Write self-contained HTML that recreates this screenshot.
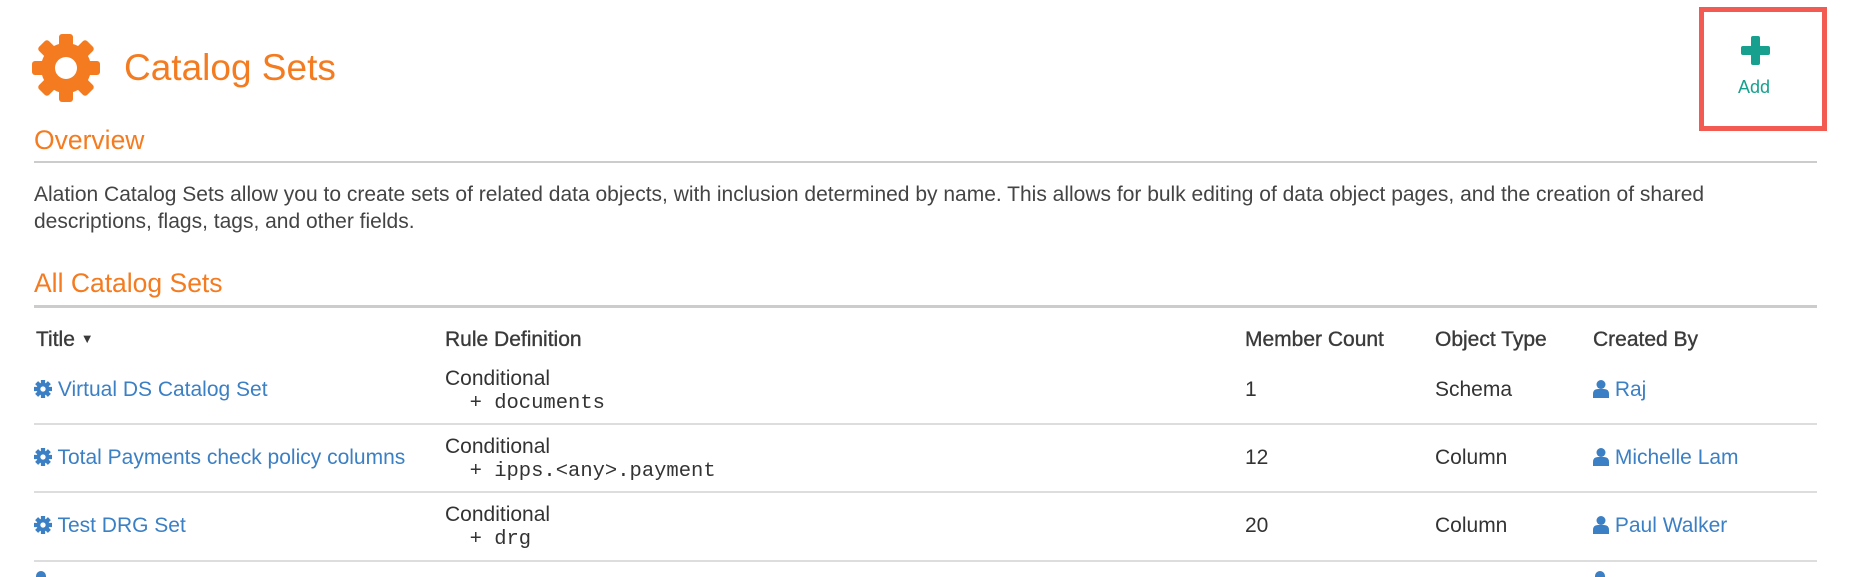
<!DOCTYPE html>
<html><head><meta charset="utf-8"><style>
body{margin:0;width:1864px;height:574px;background:#fff;font-family:"Liberation Sans",Arial,sans-serif;color:#333;position:relative;overflow:hidden}
.a{position:absolute;white-space:nowrap}
.or{color:#f47b20}
.hr{position:absolute;left:34px;width:1783px;background:#ccc}
.bl{color:#3b7fc4}
.mono{font-family:"Liberation Mono",monospace;font-size:20.5px;color:#333}
.t{font-size:21px}
.h{font-size:21px;color:#3a3a3a;-webkit-text-stroke:0.35px #3a3a3a}
</style></head><body>
<svg class="a" style="left:32px;top:34px" width="68" height="68" viewBox="-34 -34 68 68">
<g fill="#f47b20">
<circle r="25"/>
<rect x="-7" y="-34" width="14" height="14" rx="3"/>
<rect x="-7" y="-34" width="14" height="14" rx="3" transform="rotate(45)"/>
<rect x="-7" y="-34" width="14" height="14" rx="3" transform="rotate(90)"/>
<rect x="-7" y="-34" width="14" height="14" rx="3" transform="rotate(135)"/>
<rect x="-7" y="-34" width="14" height="14" rx="3" transform="rotate(180)"/>
<rect x="-7" y="-34" width="14" height="14" rx="3" transform="rotate(225)"/>
<rect x="-7" y="-34" width="14" height="14" rx="3" transform="rotate(270)"/>
<rect x="-7" y="-34" width="14" height="14" rx="3" transform="rotate(315)"/>
</g><circle r="11" fill="#fff"/></svg>
<div class="a or" style="left:124px;top:47px;font-size:37px">Catalog Sets</div>

<div class="a" style="left:1699px;top:7px;width:118px;height:114px;border:5px solid #f25a52"></div>
<svg class="a" style="left:1741px;top:36px" width="29" height="29" viewBox="0 0 29 29"><rect x="10" y="0" width="9" height="29" rx="2" fill="#17a08e"/><rect x="0" y="10" width="29" height="9" rx="2" fill="#17a08e"/></svg>
<div class="a" style="left:1738px;top:77px;font-size:18px;color:#17a08e">Add</div>

<div class="a or" style="left:34px;top:125px;font-size:26.5px">Overview</div>
<div class="hr" style="top:161px;height:2px"></div>
<div class="a t" style="left:34px;top:181px;line-height:27px;color:#444">Alation Catalog Sets allow you to create sets of related data objects, with inclusion determined by name. This allows for bulk editing of data object pages, and the creation of shared<br>descriptions, flags, tags, and other fields.</div>

<div class="a or" style="left:34px;top:268px;font-size:26.5px">All Catalog Sets</div>
<div class="hr" style="top:305px;height:3px"></div>

<div class="a h" style="left:36px;top:328px">Title <span style="font-size:13px;position:relative;top:-3px;-webkit-text-stroke:0">&#9660;</span></div>
<div class="a h" style="left:445px;top:328px">Rule Definition</div>
<div class="a h" style="left:1245px;top:328px">Member Count</div>
<div class="a h" style="left:1435px;top:328px">Object Type</div>
<div class="a h" style="left:1593px;top:328px">Created By</div>

<!-- rows -->
<div class="a bl t" style="left:34px;top:378px"><svg width="18" height="18" viewBox="-34 -34 68 68" style="vertical-align:-2px"><g fill="#3b7fc4"><circle r="24"/><rect x="-8" y="-34" width="16" height="16"/><rect x="-8" y="-34" width="16" height="16" transform="rotate(45)"/><rect x="-8" y="-34" width="16" height="16" transform="rotate(90)"/><rect x="-8" y="-34" width="16" height="16" transform="rotate(135)"/><rect x="-8" y="-34" width="16" height="16" transform="rotate(180)"/><rect x="-8" y="-34" width="16" height="16" transform="rotate(225)"/><rect x="-8" y="-34" width="16" height="16" transform="rotate(270)"/><rect x="-8" y="-34" width="16" height="16" transform="rotate(315)"/></g><circle r="10" fill="#fff"/></svg> Virtual DS Catalog Set</div>
<div class="a t" style="left:445px;top:367px">Conditional</div>
<div class="a mono" style="left:445px;top:392px">&nbsp;&nbsp;+ documents</div>
<div class="a t" style="left:1245px;top:378px">1</div>
<div class="a t" style="left:1435px;top:378px">Schema</div>
<div class="a bl t" style="left:1593px;top:378px"><svg width="16" height="18" viewBox="0 0 16 18" style="vertical-align:-2px"><circle cx="8" cy="4.5" r="4.5" fill="#3b7fc4"/><path d="M0 18V14Q0 9 5 9H11Q16 9 16 14V18Z" fill="#3b7fc4"/></svg> Raj</div>
<div class="hr" style="top:423px;height:2px;background:#ddd"></div>

<div class="a bl t" style="left:34px;top:446px"><svg width="18" height="18" viewBox="-34 -34 68 68" style="vertical-align:-2px"><g fill="#3b7fc4"><circle r="24"/><rect x="-8" y="-34" width="16" height="16"/><rect x="-8" y="-34" width="16" height="16" transform="rotate(45)"/><rect x="-8" y="-34" width="16" height="16" transform="rotate(90)"/><rect x="-8" y="-34" width="16" height="16" transform="rotate(135)"/><rect x="-8" y="-34" width="16" height="16" transform="rotate(180)"/><rect x="-8" y="-34" width="16" height="16" transform="rotate(225)"/><rect x="-8" y="-34" width="16" height="16" transform="rotate(270)"/><rect x="-8" y="-34" width="16" height="16" transform="rotate(315)"/></g><circle r="10" fill="#fff"/></svg> Total Payments check policy columns</div>
<div class="a t" style="left:445px;top:435px">Conditional</div>
<div class="a mono" style="left:445px;top:460px">&nbsp;&nbsp;+ ipps.&lt;any&gt;.payment</div>
<div class="a t" style="left:1245px;top:446px">12</div>
<div class="a t" style="left:1435px;top:446px">Column</div>
<div class="a bl t" style="left:1593px;top:446px"><svg width="16" height="18" viewBox="0 0 16 18" style="vertical-align:-2px"><circle cx="8" cy="4.5" r="4.5" fill="#3b7fc4"/><path d="M0 18V14Q0 9 5 9H11Q16 9 16 14V18Z" fill="#3b7fc4"/></svg> Michelle Lam</div>
<div class="hr" style="top:491px;height:2px;background:#ddd"></div>

<div class="a bl t" style="left:34px;top:514px"><svg width="18" height="18" viewBox="-34 -34 68 68" style="vertical-align:-2px"><g fill="#3b7fc4"><circle r="24"/><rect x="-8" y="-34" width="16" height="16"/><rect x="-8" y="-34" width="16" height="16" transform="rotate(45)"/><rect x="-8" y="-34" width="16" height="16" transform="rotate(90)"/><rect x="-8" y="-34" width="16" height="16" transform="rotate(135)"/><rect x="-8" y="-34" width="16" height="16" transform="rotate(180)"/><rect x="-8" y="-34" width="16" height="16" transform="rotate(225)"/><rect x="-8" y="-34" width="16" height="16" transform="rotate(270)"/><rect x="-8" y="-34" width="16" height="16" transform="rotate(315)"/></g><circle r="10" fill="#fff"/></svg> Test DRG Set</div>
<div class="a t" style="left:445px;top:503px">Conditional</div>
<div class="a mono" style="left:445px;top:528px">&nbsp;&nbsp;+ drg</div>
<div class="a t" style="left:1245px;top:514px">20</div>
<div class="a t" style="left:1435px;top:514px">Column</div>
<div class="a bl t" style="left:1593px;top:514px"><svg width="16" height="18" viewBox="0 0 16 18" style="vertical-align:-2px"><circle cx="8" cy="4.5" r="4.5" fill="#3b7fc4"/><path d="M0 18V14Q0 9 5 9H11Q16 9 16 14V18Z" fill="#3b7fc4"/></svg> Paul Walker</div>
<div class="hr" style="top:560px;height:2px;background:#ddd"></div>
<div class="a" style="left:36px;top:571px;width:10px;height:6px;background:#3b7fc4;border-radius:5px 5px 0 0"></div>
<div class="a" style="left:1595px;top:571px;width:10px;height:6px;background:#3b7fc4;border-radius:5px 5px 0 0"></div>
</body></html>
